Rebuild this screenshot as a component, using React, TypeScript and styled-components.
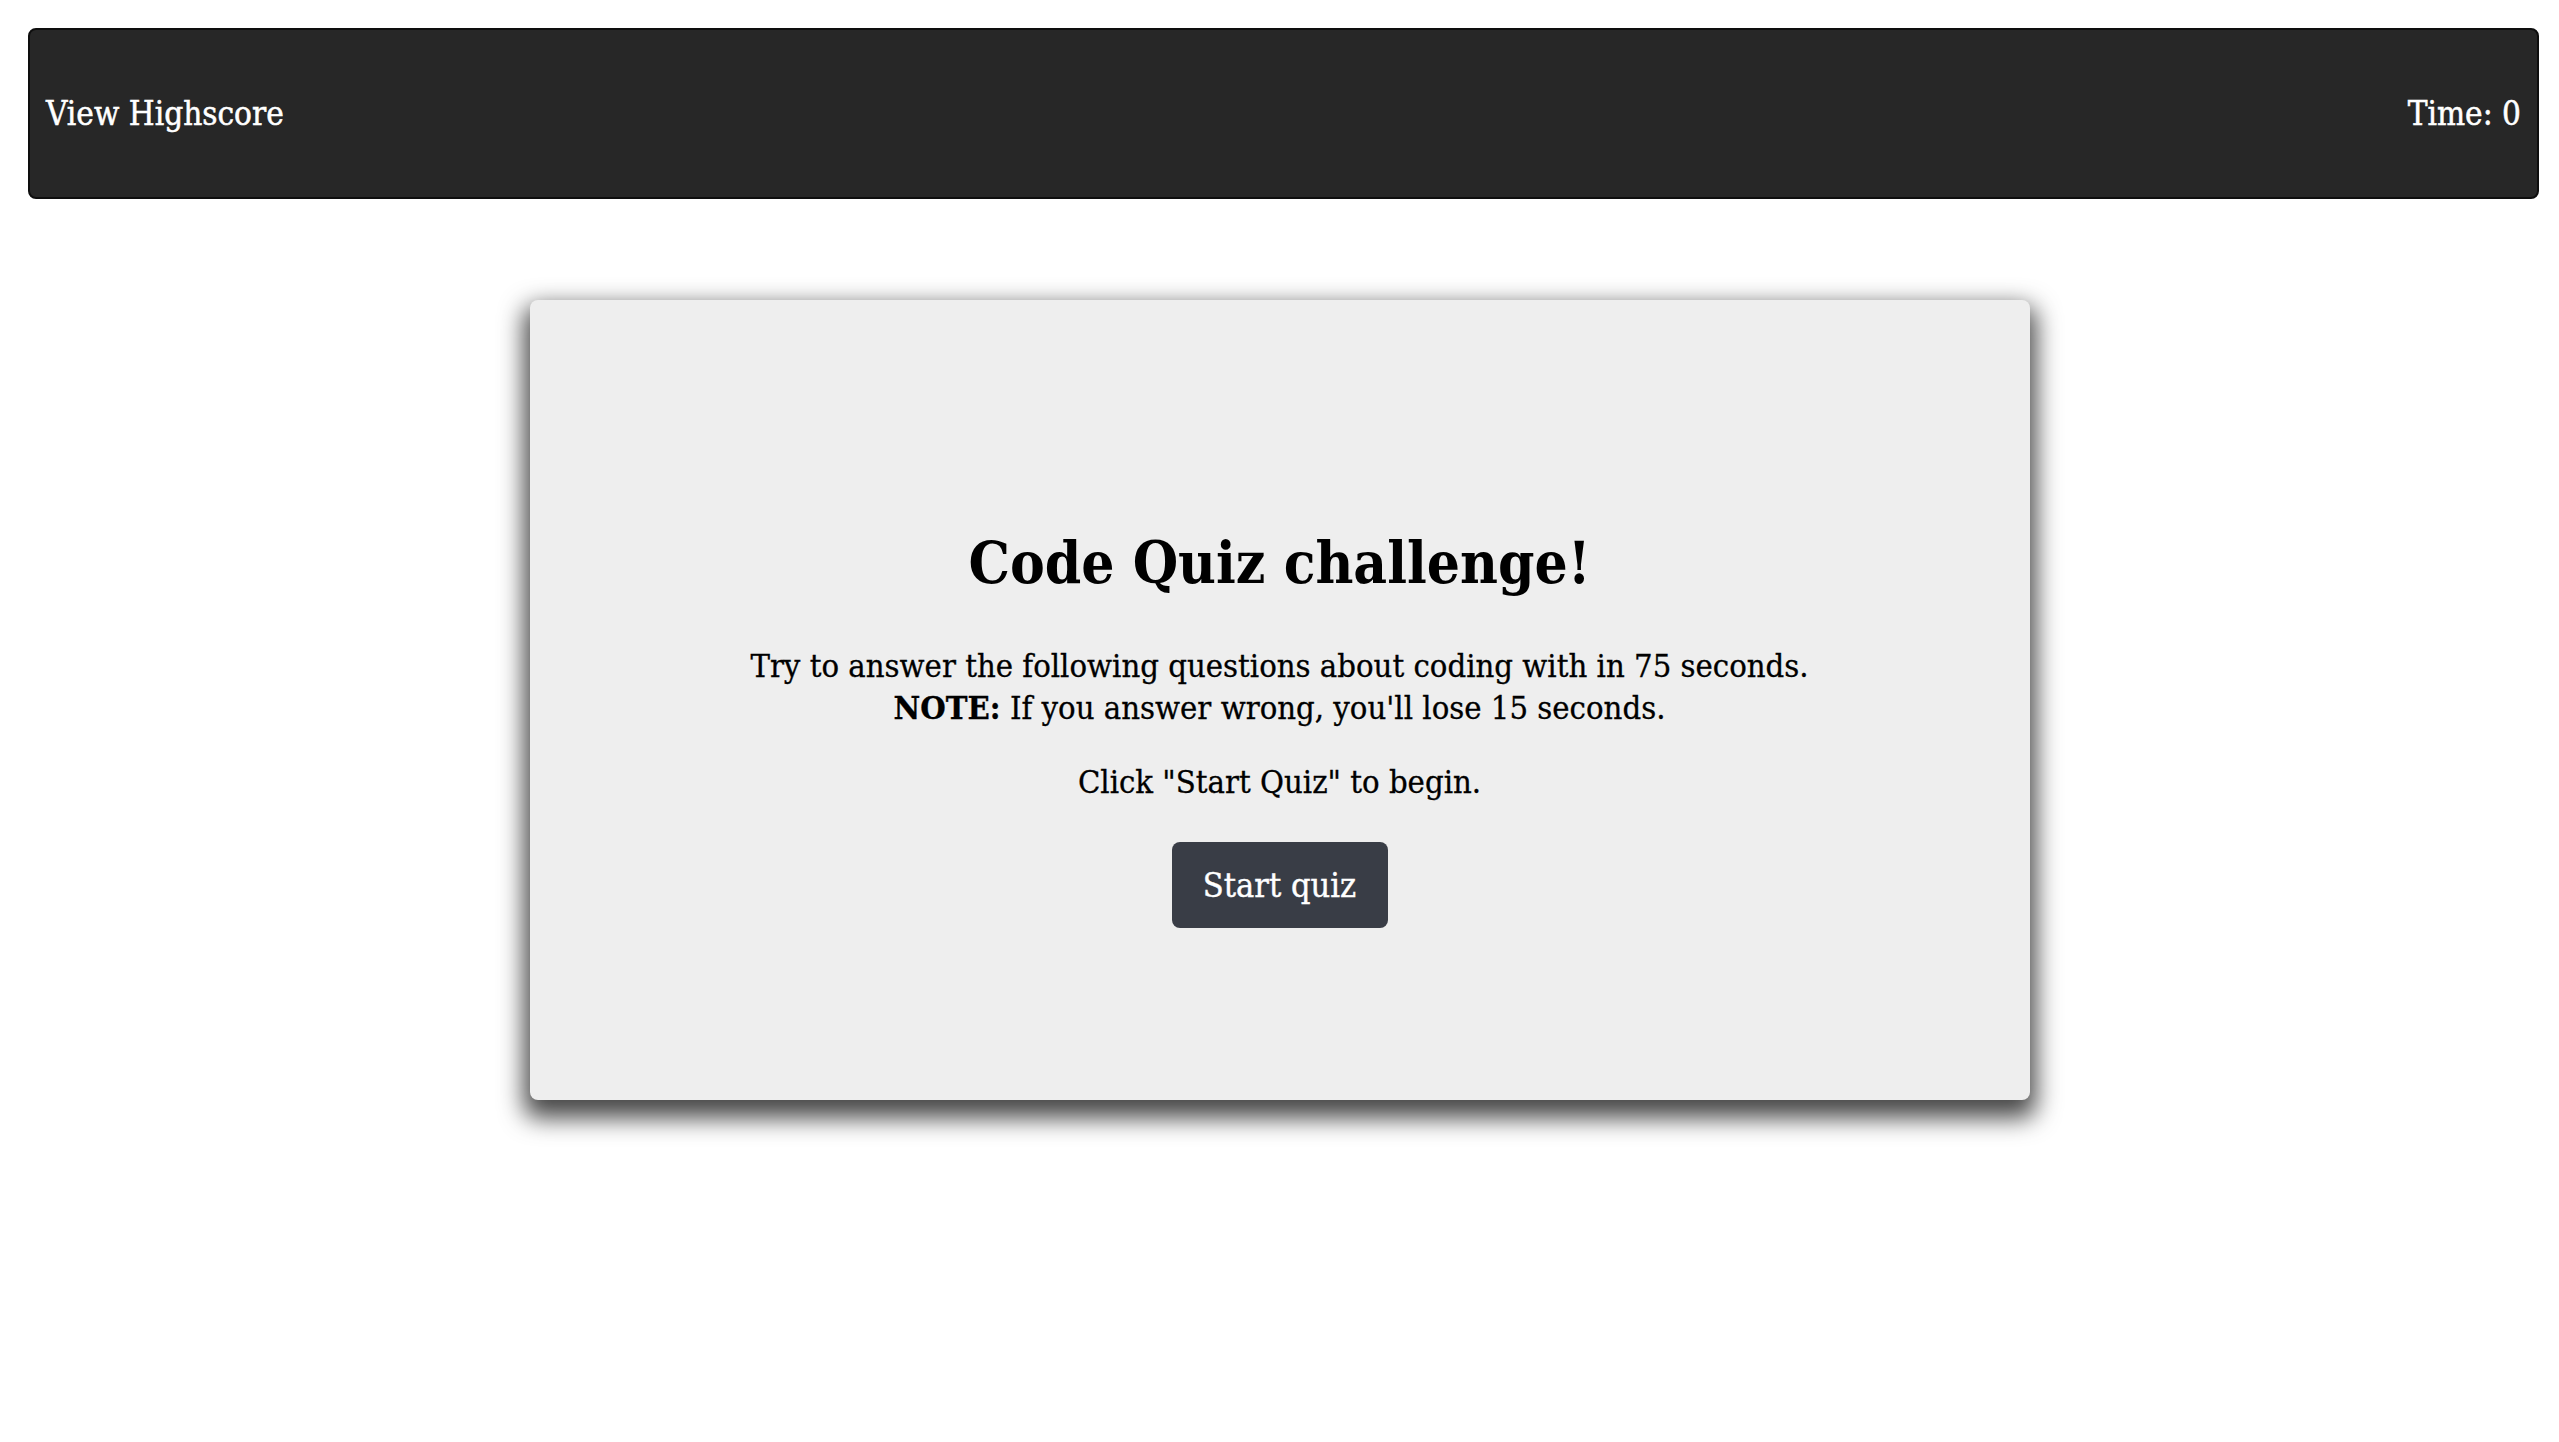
import React from "react";
import styled, { createGlobalStyle } from "styled-components";

const Global = createGlobalStyle`
  html, body { margin: 0; padding: 0; background: #ffffff; }
  body { font-family: "DejaVu Serif", "Liberation Serif", serif; font-stretch: condensed; }
`;

const Page = styled.div`
  padding: 28px 20px 60px 28px;
`;

const Header = styled.header`
  height: 171px;
  box-sizing: border-box;
  background: #272727;
  border: 2px solid #0e0e0e;
  border-radius: 8px;
  display: flex;
  align-items: center;
  justify-content: space-between;
  padding: 0 16px;
  color: #ffffff;
  font-size: 33px;
  -webkit-text-stroke: 0.5px #ffffff;
`;

const HeaderLink = styled.a`
  color: #ffffff;
  text-decoration: none;
  cursor: pointer;
`;

const Timer = styled.span`
  color: #ffffff;
`;

const Main = styled.main`
  display: flex;
  justify-content: center;
  padding-top: 101px;
  margin-left: -8px;
`;

const Card = styled.section`
  width: 1500px;
  height: 800px;
  box-sizing: border-box;
  background: #eeeeee;
  border-radius: 8px;
  box-shadow: 0 12px 24px 6px rgba(0, 0, 0, 0.72);
  display: flex;
  flex-direction: column;
  align-items: center;
  padding-top: 223px;
  text-align: center;
  color: #000000;
`;

const Title = styled.h1`
  margin: 0;
  font-size: 58px;
  line-height: 80px;
  font-weight: 700;
`;

const Text = styled.p<{ $top: number }>`
  margin: ${(p) => p.$top}px 0 0;
  font-size: 32.5px;
  line-height: 42px;
  -webkit-text-stroke: 0.3px #000000;
`;

const StartButton = styled.button`
  margin-top: 39px;
  width: 216px;
  height: 86px;
  border: none;
  border-radius: 8px;
  background: #393d46;
  color: #ffffff;
  font-family: inherit;
  font-stretch: condensed;
  font-size: 34px;
  -webkit-text-stroke: 0.4px #ffffff;
  cursor: pointer;
`;

export default function App() {
  return (
    <>
      <Global />
      <Page>
        <Header>
          <HeaderLink>View Highscore</HeaderLink>
          <Timer>Time: 0</Timer>
        </Header>
        <Main>
          <Card>
            <Title>Code Quiz challenge!</Title>
            <Text $top={42}>
              Try to answer the following questions about coding with in 75 seconds.
              <br />
              <b>NOTE:</b> If you answer wrong, you'll lose 15 seconds.
            </Text>
            <Text $top={32}>Click "Start Quiz" to begin.</Text>
            <StartButton>Start quiz</StartButton>
          </Card>
        </Main>
      </Page>
    </>
  );
}
